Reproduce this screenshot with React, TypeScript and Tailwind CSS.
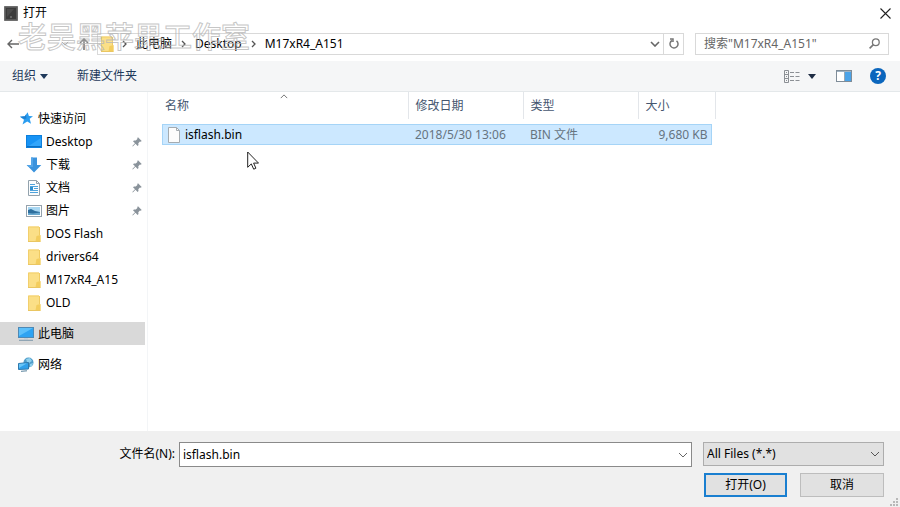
import type { ReactNode } from "react";

type IconProps = { className?: string };

function Chevron({ className }: IconProps) {
  return (
    <svg viewBox="0 0 10 6" className={className} fill="none" stroke="currentColor">
      <path d="M1 1l4 4 4-4" />
    </svg>
  );
}

function Crumb() {
  return (
    <svg viewBox="0 0 5 8" className="h-2 w-[5px] shrink-0 text-[#555]" fill="none" stroke="currentColor" strokeWidth="1.3">
      <path d="M1 1l3 3-3 3" />
    </svg>
  );
}

function AppIcon() {
  return (
    <svg viewBox="0 0 14 15" className="h-[15px] w-3.5">
      <rect x="0.5" y="0.5" width="13" height="14" fill="#5a5a5a" stroke="#333" strokeDasharray="1 1" />
      <rect x="2" y="2" width="10" height="11" fill="#3c3c3c" />
      <path d="M3 3h7L3 11z" fill="#4c4c4c" />
      <rect x="6" y="10" width="2" height="2" fill="#666" />
    </svg>
  );
}

function Folder({ className }: IconProps) {
  return (
    <svg viewBox="0 0 13 16" className={className}>
      <path d="M0 0.500h11v8l1.500 1v6H0z" fill="#fbdf87" />
      <path d="M0.500 15V1H11" fill="none" stroke="#f2cf6d" />
      <path d="M11.500 1v8" stroke="#f0cb62" />
      <path d="M8.500 10l4-1v6.500h-5z" fill="#f3cd5e" />
      <path d="M0 15.500h12.500" stroke="#eac662" />
    </svg>
  );
}

function Star() {
  return (
    <svg viewBox="0 0 13 13" className="h-[13px] w-[13px]">
      <path d="M7.600 0.300l1.300 3.700 4.100.2-3.300 2.600 1.300 5-3.800-2.400-4.700 3 1.500-4.700L0 4.700l4.900-.5z" fill="#2a9df0" />
      <path d="M0 4.700l4.900-.5 1-1.700.6 4-2.200.5z" fill="#1c7fd0" />
    </svg>
  );
}

function DesktopIcon() {
  return (
    <svg viewBox="0 0 16 13" className="h-[13px] w-4">
      <rect x="0.500" y="0.500" width="15" height="12" fill="#1793f5" stroke="#0d7fdc" />
      <path d="M1 12L15 3v9z" fill="#31a5fb" />
      <path d="M1 11.500h14" stroke="#0b6fc4" />
    </svg>
  );
}

function DownloadIcon() {
  return (
    <svg viewBox="0 0 16 16" className="h-4 w-4">
      <path d="M5 0.500h6V8h4.300L8 15.500 0.700 8H5z" fill="#3b93dd" />
      <path d="M5 0.500h2V10H2.500L0.700 8H5z" fill="#55a6e8" />
    </svg>
  );
}

function DocumentIcon() {
  return (
    <svg viewBox="0 0 12 16" className="h-4 w-3">
      <path d="M0.500 0.500h8l3 3V15.500H0.500z" fill="#fafcfd" stroke="#93a2ad" />
      <path d="M8.500 0.500v3h3" fill="none" stroke="#93a2ad" />
      <path d="M2 4.500h5M2 6.500h8M2 10.500h8M2 12.500h8M6 8.500h4" stroke="#4fa3dc" />
      <rect x="2" y="7" width="3" height="3" fill="#2f8fd0" />
    </svg>
  );
}

function PictureIcon() {
  return (
    <svg viewBox="0 0 16 12" className="h-3 w-4">
      <rect x="0.500" y="0.500" width="15" height="11" fill="#fff" stroke="#95a2ad" />
      <rect x="2" y="2" width="12" height="8" fill="#a9d7f2" />
      <path d="M2 5l3-1 4 2 5 1v3H2z" fill="#2e6f9e" />
      <path d="M2 8l5 .5 7-1V10H2z" fill="#6aa9cf" />
    </svg>
  );
}

function ComputerIcon() {
  return (
    <svg viewBox="0 0 16 14" className="h-3.5 w-4">
      <rect x="0.500" y="0.500" width="15" height="10" fill="#2ea3f2" stroke="#4e89b5" />
      <path d="M1 1h14L1 9z" fill="#5cc0fb" />
      <path d="M6 11h4v1.500H6z" fill="#c5d0d8" />
      <path d="M1 13.300h14" stroke="#7d98aa" />
    </svg>
  );
}

function NetworkIcon() {
  return (
    <svg viewBox="0 0 16 15" className="h-[15px] w-4">
      <circle cx="10.500" cy="5.500" r="5" fill="#4f9cc9" />
      <path d="M8 2l4-1 2 3-3 2-2-1zM12 7l3-1-1 3-2 1z" fill="#8fd0ee" />
      <path d="M0.500 6.500l10-1v6.500l-10 .5z" fill="#2fa0ea" stroke="#2f79ac" />
      <path d="M1 7l8-.7L1 11z" fill="#67c5f8" />
      <path d="M3 14.300l6-.5" stroke="#56809b" />
    </svg>
  );
}

function Pin() {
  return (
    <svg viewBox="0 0 10 10" className="h-2.5 w-2.5">
      <path d="M6 0.300L9.700 4l-1 .7-.8-.2-1.600 1.700.2 1.800-.9.900L3.500 6.800 0.800 9.500l-.5-.5L3 6.300 1 4.300l1-.9 1.800.2 1.600-1.500-.1-1z" fill="#8a939b" />
    </svg>
  );
}

function FileIcon() {
  return (
    <svg viewBox="0 0 12 16" className="h-4 w-3 shrink-0">
      <path d="M0.500 0.500h8l3 3v12h-11z" fill="#fcfcfc" stroke="#a4abb0" />
      <path d="M8.500 0.500v3h3" fill="none" stroke="#a4abb0" />
    </svg>
  );
}

type PlaceProps = { icon: ReactNode; label: string; pinned?: boolean; top?: boolean; selected?: boolean };

function Place({ icon, label, pinned, top, selected }: PlaceProps) {
  return (
    <li>
      <a
        href="#"
        className={`flex h-[23px] items-center pr-[3px] ${top ? "pl-[18px]" : "pl-[26px]"} ${selected ? "bg-[#d9d9d9]" : ""}`}
      >
        <span className="flex w-4 shrink-0 justify-center">{icon}</span>
        <span className="ml-1 flex-1 whitespace-nowrap">{label}</span>
        {pinned && <Pin />}
      </a>
    </li>
  );
}

const folders = ["DOS Flash", "drivers64", "M17xR4_A15", "OLD"];
const path = ["此电脑", "Desktop", "M17xR4_A151"];

export default function App() {
  return (
    <div className="relative flex h-screen flex-col overflow-hidden bg-white font-['Noto_Sans','Noto_Sans_CJK_SC',sans-serif] text-[12px] leading-4 text-black">
      <header className="flex h-[26px] shrink-0 items-center pr-[7px] pl-1">
        <AppIcon />
        <h1 className="ml-[5px] flex-1">打开</h1>
        <button aria-label="关闭" className="flex h-5 w-4 items-center justify-center">
          <svg viewBox="0 0 11 11" className="h-[11px] w-[11px]" fill="none" stroke="#222" strokeWidth="1.1">
            <path d="M0.500 0.500l10 10M10.500 0.500l-10 10" />
          </svg>
        </button>
      </header>

      <nav className="flex h-[35px] shrink-0 items-center pr-[11px] pl-[7px]">
        <button aria-label="后退">
          <svg viewBox="0 0 12 10" className="h-2.5 w-3" fill="none" stroke="#666" strokeWidth="1.4">
            <path d="M12 5H1M5 1L1 5l4 4" />
          </svg>
        </button>
        <button aria-label="最近位置" className="ml-[42px] text-[#888]">
          <Chevron className="h-[5px] w-2" />
        </button>
        <button aria-label="上移" className="ml-2.5">
          <svg viewBox="0 0 10 12" className="h-3 w-2.5" fill="none" stroke="#777" strokeWidth="1.600">
            <path d="M5 12V1M1 5l4-4 4 4" />
          </svg>
        </button>
        <div className="ml-2 flex h-[22px] flex-1 items-center border border-[#d9d9d9]">
          <Folder className="ml-[3px] h-4 w-[13px]" />
          <ol className="ml-2 flex flex-1 items-center gap-[9px]">
            {path.map((name) => (
              <li key={name} className="flex items-center gap-[9px]">
                <Crumb />
                {name}
              </li>
            ))}
          </ol>
          <button aria-label="历史记录" className="mr-[3px] text-[#666]">
            <Chevron className="h-1.5 w-2.5 stroke-[1.6]" />
          </button>
          <button aria-label="刷新" className="flex h-full w-5 items-center justify-center border-l border-[#d9d9d9]">
            <svg viewBox="0 0 10 11" className="h-[11px] w-2.5" fill="none" stroke="#777" strokeWidth="1.500">
              <path d="M3 2.500a4 4 0 1 0 4.500.300M1 1h3v3" />
            </svg>
          </button>
        </div>
        <label className="ml-[11px] flex h-[22px] w-[194px] items-center border border-[#d9d9d9] px-2">
          <input aria-label="搜索" placeholder={'搜索"M17xR4_A151"'} className="min-w-0 flex-1 outline-none placeholder:text-[#666]" />
          <svg viewBox="0 0 11 11" className="h-[11px] w-[11px]" fill="none" stroke="#777" strokeWidth="1.300">
            <circle cx="6.800" cy="4.200" r="3.400" />
            <path d="M4.400 6.600L0.600 10.400" strokeWidth="1.600" />
          </svg>
        </label>
      </nav>

      <div className="flex h-[31px] shrink-0 items-center border-b border-[#e4e8ea] bg-[#f5f6f7] pr-3.5 pl-3 text-[#1e395b]">
        <button className="flex items-center gap-1">
          组织
          <svg viewBox="0 0 8 5" className="h-[5px] w-2"><path d="M0 0h8L4 5z" fill="#1e395b" /></svg>
        </button>
        <button className="ml-[29px]">新建文件夹</button>
        <button aria-label="更改视图" className="ml-auto flex items-center gap-2">
          <svg viewBox="0 0 16 13" className="h-[13px] w-4" fill="none" stroke="#8b8f94">
            <path d="M0.500 0.500h4v12h-4zM0.500 4.500h4M0.500 8.500h4M2 2.500h1M2 6.500h1M2 10.500h1" />
            <path d="M6 2.500h4M11.500 2.500h4M6 6.500h4M11.500 6.500h4M6 10.500h4M11.500 10.500h4" />
          </svg>
          <svg viewBox="0 0 8 5" className="h-[5px] w-2"><path d="M0 0h8L4 5z" fill="#1e2c44" /></svg>
        </button>
        <button aria-label="预览窗格" className="ml-5">
          <svg viewBox="0 0 16 12" className="h-3 w-4">
            <rect x="0.500" y="0.500" width="15" height="11" fill="#fff" stroke="#7f8c98" />
            <path d="M1 1.500h14" stroke="#9fb3c4" />
            <rect x="9" y="2" width="6" height="9" fill="#4ba3e8" />
            <path d="M8.500 2v9" stroke="#9aa7b2" />
          </svg>
        </button>
        <button aria-label="帮助" className="ml-[18px] flex h-4 w-4 items-center justify-center rounded-full bg-[#0b66bd] font-bold text-white">
          ?
        </button>
      </div>

      <main className="flex min-h-0 flex-1">
        <aside className="w-[148px] shrink-0 border-r border-[#f3f5f7] pt-[15px] pr-0.5">
          <ul>
            <Place top icon={<Star />} label="快速访问" />
            <Place pinned icon={<DesktopIcon />} label="Desktop" />
            <Place pinned icon={<DownloadIcon />} label="下载" />
            <Place pinned icon={<DocumentIcon />} label="文档" />
            <Place pinned icon={<PictureIcon />} label="图片" />
            {folders.map((name) => (
              <Place key={name} icon={<Folder className="h-4 w-[13px]" />} label={name} />
            ))}
          </ul>
          <ul className="mt-2 flex flex-col gap-2">
            <Place top selected icon={<ComputerIcon />} label="此电脑" />
            <Place top icon={<NetworkIcon />} label="网络" />
          </ul>
        </aside>

        <section className="flex-1 pl-3.5">
          <table className="w-[554px] table-fixed border-collapse text-left">
            <thead className="text-[#45566f]">
              <tr className="h-[27px]">
                <th scope="col" className="relative w-[246px] border-r border-[#e3e6ea] pl-[3px] font-normal">
                  名称
                  <Chevron className="absolute top-0.5 left-[118px] h-[5px] w-2 rotate-180 text-[#555]" />
                </th>
                <th scope="col" className="w-[115px] border-r border-[#e3e6ea] pl-[7px] font-normal">修改日期</th>
                <th scope="col" className="w-[115px] border-r border-[#e3e6ea] pl-[7px] font-normal">类型</th>
                <th scope="col" className="border-r border-[#e3e6ea] pl-[7px] font-normal">大小</th>
              </tr>
            </thead>
            <tbody className="text-[#66747f]">
              <tr>
                <td className="pt-[5px]">
                  <div className="flex h-[21px] items-center gap-[5px] border border-r-0 border-[#a5d4f7] bg-[#cce8ff] pl-[5px] text-black">
                    <FileIcon />
                    isflash.bin
                  </div>
                </td>
                <td className="pt-[5px]">
                  <div className="flex h-[21px] items-center border-y border-[#a5d4f7] bg-[#cce8ff] pl-[7px]">2018/5/30 13:06</div>
                </td>
                <td className="pt-[5px]">
                  <div className="flex h-[21px] items-center border-y border-[#a5d4f7] bg-[#cce8ff] pl-[7px]">BIN 文件</div>
                </td>
                <td className="pt-[5px] pr-1">
                  <div className="flex h-[21px] items-center justify-end border border-l-0 border-[#a5d4f7] bg-[#cce8ff] pr-[3px]">9,680 KB</div>
                </td>
              </tr>
            </tbody>
          </table>
        </section>
      </main>

      <footer className="flex h-[76px] shrink-0 flex-col gap-1.5 bg-[#f0f0f0] pt-[11px] pr-4">
        <div className="flex items-start">
          <label htmlFor="filename" className="w-[175px] pt-1 text-right">文件名(N):</label>
          <div className="ml-1 flex h-[25px] flex-1 items-center border border-[#8a8a8a] bg-white pr-[3px]">
            <input id="filename" defaultValue="isflash.bin" className="min-w-0 flex-1 pl-[3px] outline-none" />
            <button aria-label="文件名列表" className="text-[#666]"><Chevron className="h-1.5 w-2.5" /></button>
          </div>
          <div className="relative ml-[11px] w-[181px]">
            <select aria-label="文件类型" className="h-6 w-full appearance-none border border-[#adadad] bg-[#e1e1e1] pl-[3px] outline-none">
              <option>All Files (*.*)</option>
            </select>
            <Chevron className="pointer-events-none absolute top-[9px] right-1 h-1.5 w-2.5 text-[#555]" />
          </div>
        </div>
        <div className="flex justify-end gap-[13px]">
          <button className="h-6 w-[83px] border-2 border-[#1a7fd0] bg-[#e1e1e1]">打开(O)</button>
          <button className="h-6 w-[84px] border border-[#bdbdbd] bg-[#e1e1e1]">取消</button>
        </div>
      </footer>

      <svg viewBox="0 0 8 8" className="absolute right-0.5 bottom-px h-2 w-2" fill="#b8b8b8">
        <path d="M6 0h2v2H6zM3 3h2v2H3zM6 3h2v2H6zM0 6h2v2H0zM3 6h2v2H3zM6 6h2v2H6z" />
      </svg>
      <p className="pointer-events-none absolute top-[21px] left-[18px] text-[29px] leading-8 font-medium whitespace-nowrap text-white/10 [-webkit-text-stroke:1px_#b4b4b4c0]">
        老吴黑苹果工作室
      </p>
      <svg viewBox="0 0 12 19" className="pointer-events-none absolute top-[151px] left-[247px] h-[19px] w-3">
        <path d="M0.700 1v15.300l3.600-3.400 2.400 5.300 2.200-1-2.300-5.100h4.900z" fill="#fff" stroke="#222" />
      </svg>
    </div>
  );
}
